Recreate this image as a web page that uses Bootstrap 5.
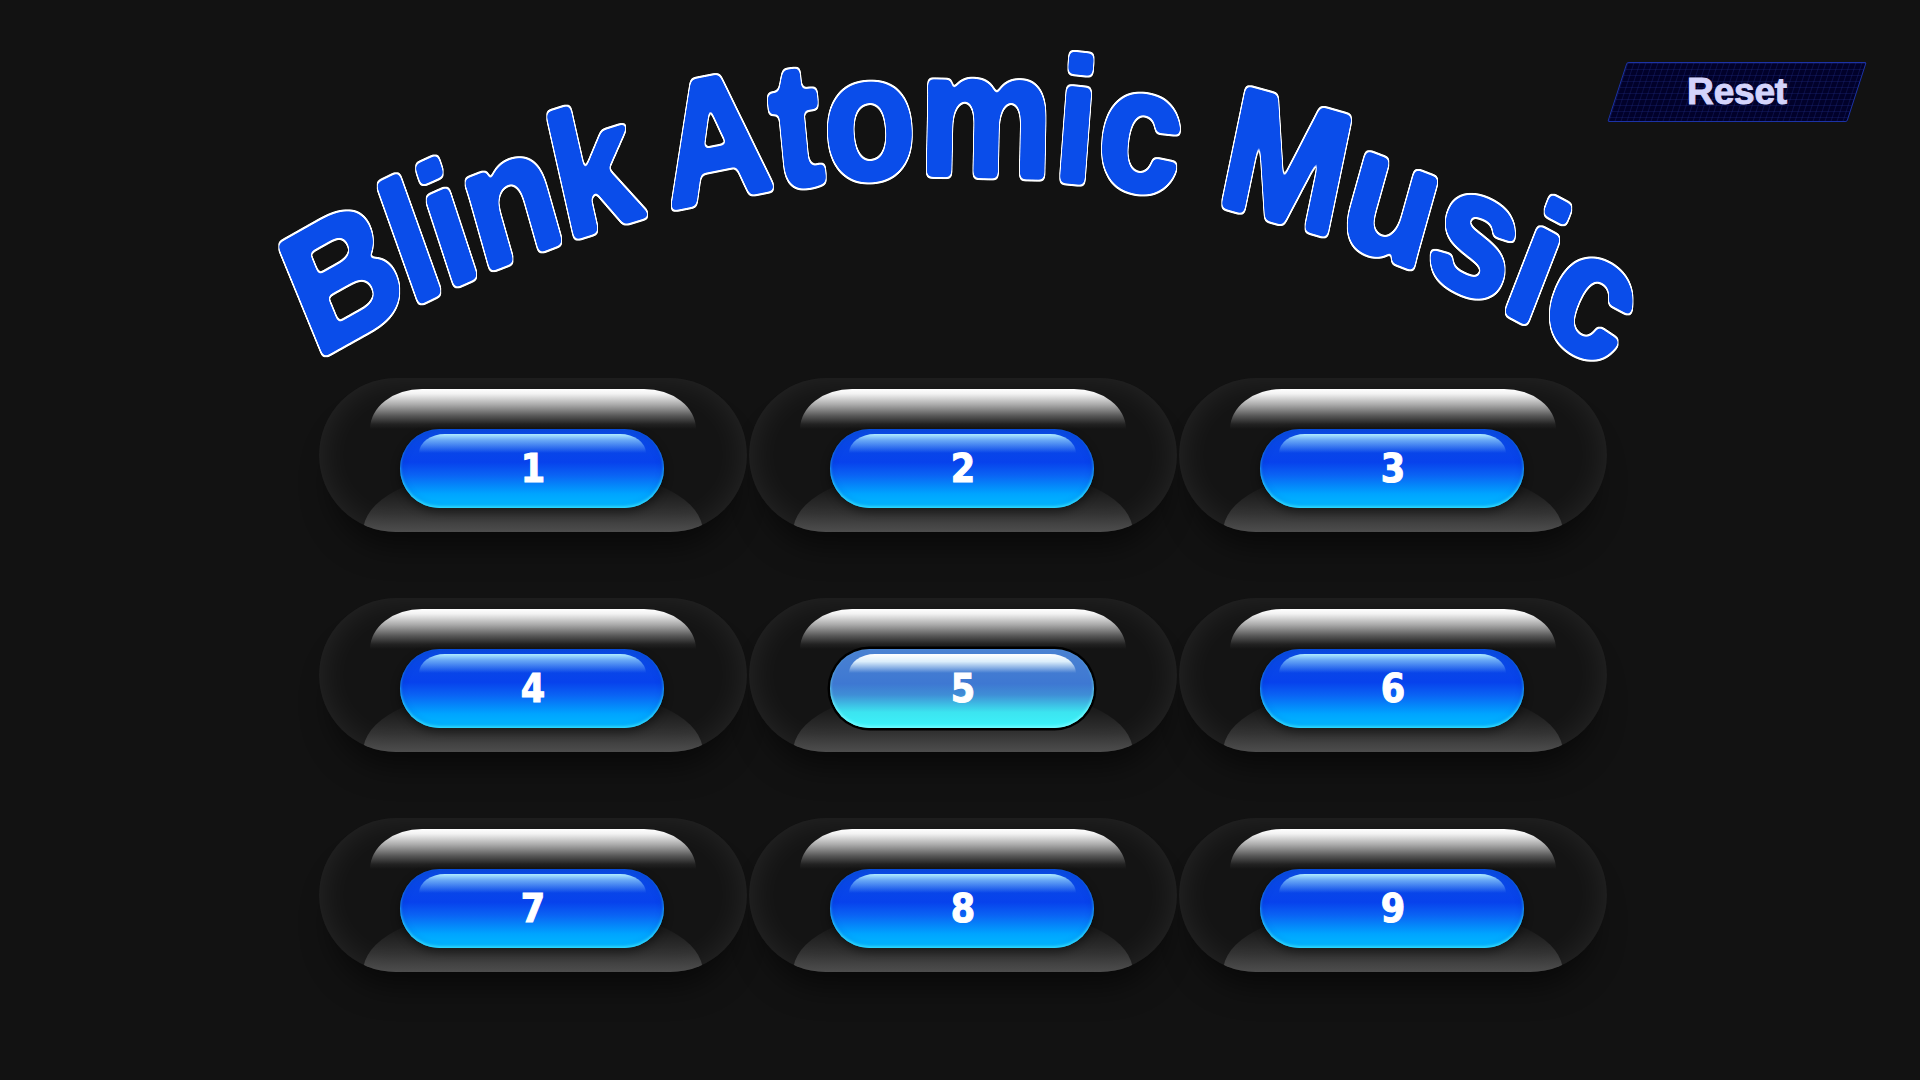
<!DOCTYPE html>
<html lang="en">
<head>
<meta charset="utf-8">
<title>Blink Atomic Music</title>
<link href="https://cdn.jsdelivr.net/npm/bootstrap@5.3.0/dist/css/bootstrap.min.css" rel="stylesheet">
<style>
html,body{height:100%;margin:0;background:#121212;overflow:hidden}
.stage{width:1920px;height:1080px;background:#121212}
.masthead{display:grid;height:378px}
.masthead>*{grid-area:1/1}
.arc-title{width:1920px;height:378px;display:block;overflow:visible}
.arc-title text{font-family:"Liberation Sans",Arial,sans-serif;font-weight:700;font-size:150px;word-spacing:-12px;fill:#0a4dea;stroke:#0a4dea;stroke-width:4px;stroke-linejoin:round;filter:url(#halo)}
.arc-word-a{letter-spacing:-3.2px}
.arc-word-b{letter-spacing:.2px}
.arc-word-c{letter-spacing:-.8px}
.reset-wrap{justify-self:end;align-self:start;margin:62px 63px 0 0}
.reset-btn{position:relative;z-index:0;width:240px;height:60px;padding:0;border:0;background:transparent;color:#d4d4fb;font:700 37px/60px "Liberation Sans",Arial,sans-serif;-webkit-text-stroke:1px #d4d4fb;letter-spacing:-.2px}
.reset-btn:hover,.reset-btn:active{color:#d4d4fb;background:transparent}
.reset-btn::before{content:"";position:absolute;inset:0;z-index:-1;transform:skewX(-18deg);background-color:#01012a;background-image:linear-gradient(rgba(50,70,190,.2) 1px,transparent 1px),linear-gradient(90deg,rgba(50,70,190,.2) 1px,transparent 1px);background-size:6px 6px;border:1.5px solid #1c33a6;border-radius:2px}
.pad-grid{display:grid;grid-template-columns:repeat(3,428px);column-gap:2px;row-gap:66px;margin-left:319px;width:max-content}
.pad-outer{border-radius:77px;box-shadow:0 28px 30px -14px rgba(0,0,0,.55)}
.pad-shell{position:relative;height:154px;border-radius:77px;background:#141414;box-shadow:inset 0 0 34px rgba(255,255,255,.085);display:flex;justify-content:center;align-items:flex-start;overflow:hidden}
.pad-shell::before{content:"";position:absolute;left:51px;right:51px;top:11px;height:40px;border-radius:52px 52px 0 0/40px 40px 0 0;background:linear-gradient(#fff 0,#f2f2f2 12%,#a8a8a8 40%,#555 68%,#222 88%,rgba(20,20,20,0) 100%)}
.pad-shell::after{content:"";position:absolute;left:44px;right:44px;bottom:0;height:58px;border-radius:110px 110px 0 0/58px 58px 0 0;background:linear-gradient(rgba(85,85,85,0) 0,rgba(85,85,85,.12) 30%,rgba(80,80,80,.5) 68%,#4d4d4d 100%)}
.pad-key{position:relative;z-index:1;width:264px;height:79px;margin:51px 2px 0 0;padding:1px 0 0 2px;border:0;border-radius:40px;color:#fff;font:700 39px/78px "DejaVu Sans Condensed","DejaVu Sans",sans-serif;-webkit-text-stroke:1px #fff;overflow:hidden;box-shadow:0 4px 10px rgba(0,0,0,.45),inset 0 -2px 3px #2fdcff,inset 0 0 6px rgba(0,60,190,.5);background:linear-gradient(#0b4ce2 0,#0742ec 42%,#0a62f4 58%,#00a4ff 82%,#00baff 100%)}
.pad-key:hover,.pad-key:focus{color:#fff;background:linear-gradient(#0b4ce2 0,#0742ec 42%,#0a62f4 58%,#00a4ff 82%,#00baff 100%)}
.pad-key::before{content:"";position:absolute;left:19px;right:18px;top:5px;height:19px;border-radius:26px 26px 0 0/19px 19px 0 0;background:linear-gradient(#b0ecff 0,rgba(150,215,255,.7) 30%,rgba(60,130,255,0) 100%)}
.pad-key span{position:relative}
.pad-key.is-lit,.pad-key.is-lit:hover,.pad-key.is-lit:focus,.pad-key.is-lit:active{box-shadow:0 0 0 2.5px #000,inset 0 -2px 3px #70faff;background:linear-gradient(#4a82d2 0,#3e78d2 44%,#3f8ed6 58%,#3ce4f0 80%,#3cf4fb 100%);color:#fff}
.pad-key.is-lit::before{background:linear-gradient(#fff 0,rgba(235,250,255,.9) 40%,rgba(120,170,230,0) 100%)}
</style>
</head>
<body>
<main class="stage">
  <header class="masthead">
    <svg class="arc-title" viewBox="0 0 1920 378" role="img" aria-label="Blink Atomic Music">
      <defs>
        <path id="arch" d="M301 316 A1363 1363 0 0 1 1623 326"/>
        <filter id="halo" x="-5%" y="-30%" width="110%" height="160%" color-interpolation-filters="sRGB">
          <feGaussianBlur in="SourceAlpha" stdDeviation="2.6"/>
          <feComponentTransfer result="solid"><feFuncA type="linear" slope="10" intercept="-4.5"/></feComponentTransfer>
          <feMorphology in="solid" operator="dilate" radius="1.4" result="grown"/>
          <feFlood flood-color="#ffffff"/>
          <feComposite in2="grown" operator="in" result="rim"/>
          <feFlood flood-color="#0a4dea"/>
          <feComposite in2="solid" operator="in" result="body"/>
          <feMerge><feMergeNode in="rim"/><feMergeNode in="body"/></feMerge>
        </filter>
      </defs>
      <g transform="scale(1 1.17)">
        <text text-anchor="middle"><textPath href="#arch" startOffset="50%"><tspan class="arc-word-a">Blink </tspan><tspan class="arc-word-b">Atomic </tspan><tspan class="arc-word-c" dx="8">Music</tspan></textPath></text>
      </g>
    </svg>
    <div class="reset-wrap"><button type="button" class="btn reset-btn">Reset</button></div>
  </header>
  <section class="pad-grid">
    <div class="pad-outer"><div class="pad-shell"><button type="button" class="btn pad-key"><span>1</span></button></div></div>
    <div class="pad-outer"><div class="pad-shell"><button type="button" class="btn pad-key"><span>2</span></button></div></div>
    <div class="pad-outer"><div class="pad-shell"><button type="button" class="btn pad-key"><span>3</span></button></div></div>
    <div class="pad-outer"><div class="pad-shell"><button type="button" class="btn pad-key"><span>4</span></button></div></div>
    <div class="pad-outer"><div class="pad-shell"><button type="button" class="btn pad-key is-lit"><span>5</span></button></div></div>
    <div class="pad-outer"><div class="pad-shell"><button type="button" class="btn pad-key"><span>6</span></button></div></div>
    <div class="pad-outer"><div class="pad-shell"><button type="button" class="btn pad-key"><span>7</span></button></div></div>
    <div class="pad-outer"><div class="pad-shell"><button type="button" class="btn pad-key"><span>8</span></button></div></div>
    <div class="pad-outer"><div class="pad-shell"><button type="button" class="btn pad-key"><span>9</span></button></div></div>
  </section>
</main>
<script src="https://cdn.jsdelivr.net/npm/bootstrap@5.3.0/dist/js/bootstrap.bundle.min.js"></script>
</body>
</html>
